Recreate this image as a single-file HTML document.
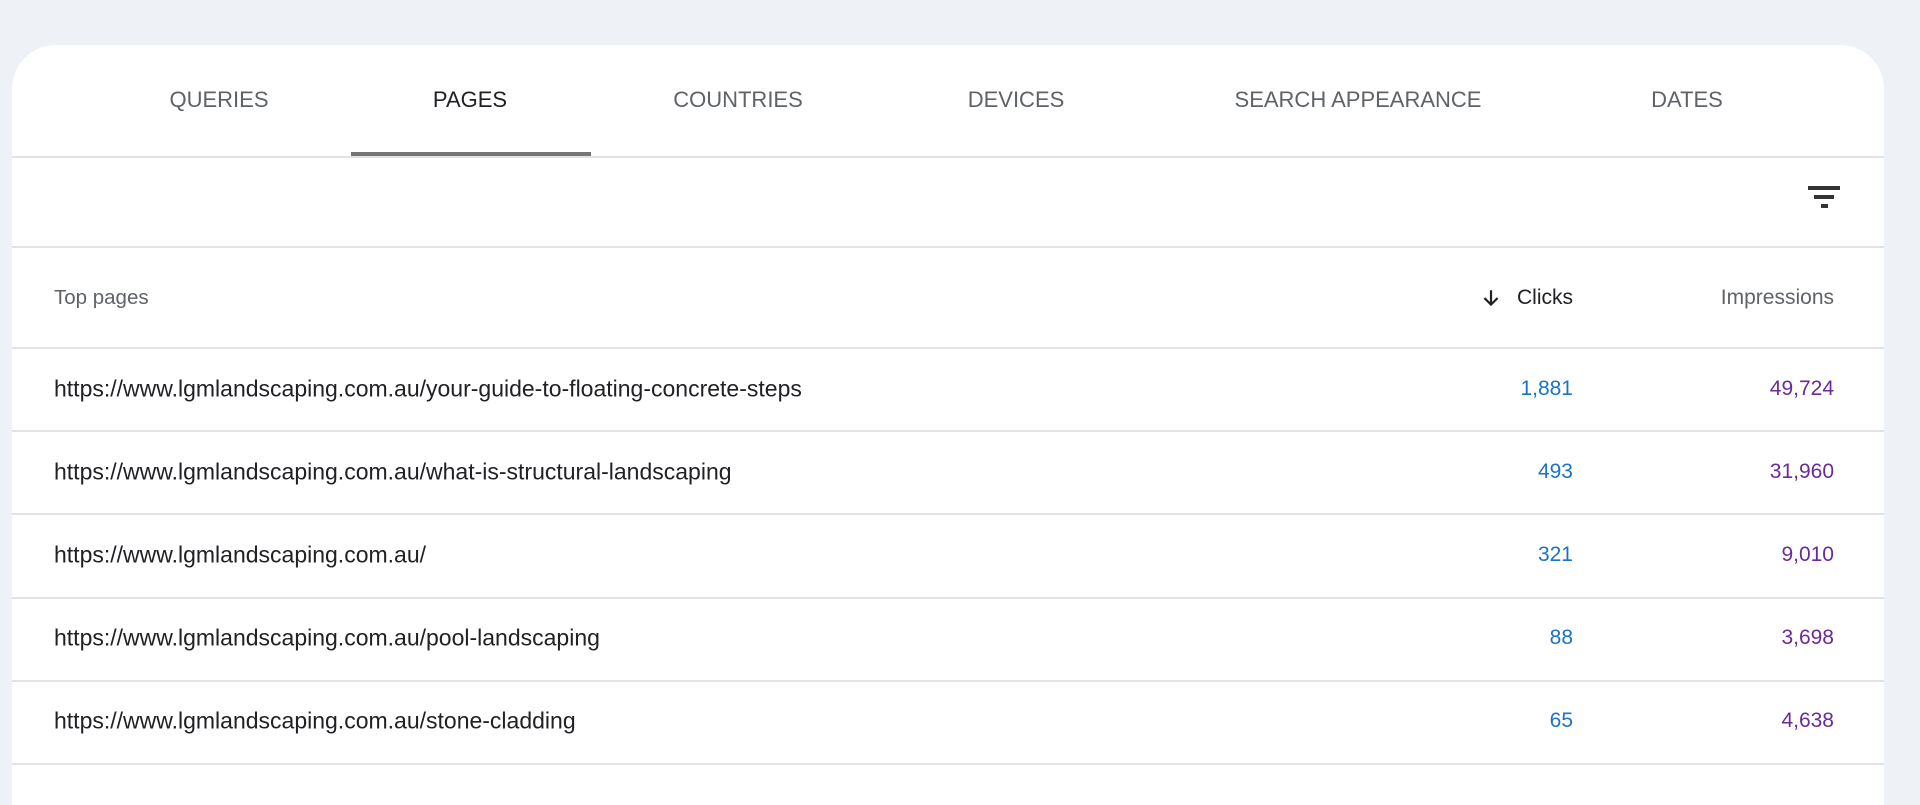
<!DOCTYPE html>
<html><head><meta charset="utf-8"><style>
*{margin:0;padding:0;box-sizing:border-box}
body{width:1920px;height:783px;background:#eef2f7;font-family:"Liberation Sans",Roboto,sans-serif;position:relative;overflow:hidden}
.card{position:absolute;left:12px;top:45px;width:1872px;height:760px;background:#fff;border-radius:44px 44px 0 0}
.tab{position:absolute;top:87px;font-size:22px;color:#5f6368;transform:translateX(-50%);white-space:nowrap}
.tab.act{color:#202124}
.ul{position:absolute;left:351px;top:152px;width:240px;height:4px;background:#757575}
.hl{position:absolute;left:12px;width:1872px;height:2px;background:#e3e3e3}
.t{position:absolute;font-size:23px;color:#202124;white-space:nowrap;transform:translateY(-50%)}
.n{font-size:21px}
.c{color:#1a73c8}.i{color:#6a2a9a}
</style></head><body>
<div class="card"></div>
<div class="tab" style="left:219px">QUERIES</div>
<div class="tab act" style="left:470px">PAGES</div>
<div class="tab" style="left:738px">COUNTRIES</div>
<div class="tab" style="left:1016px">DEVICES</div>
<div class="tab" style="left:1358px">SEARCH APPEARANCE</div>
<div class="tab" style="left:1687px">DATES</div>
<div class="ul"></div>
<div class="hl" style="top:156px"></div>
<div style="position:absolute;left:1808px;top:186px;width:32px;height:4px;background:#333"></div>
<div style="position:absolute;left:1814px;top:195px;width:20px;height:4px;background:#333"></div>
<div style="position:absolute;left:1821px;top:204px;width:7px;height:4px;background:#333"></div>
<div class="hl" style="top:246px"></div>
<div class="t" style="left:54px;top:298px;font-size:20.5px;color:#5f6368">Top pages</div>
<svg style="position:absolute;left:1480px;top:287px" width="22" height="22" viewBox="0 0 20 20"><path d="M10 3v13M4 10l6 6 6-6" stroke="#202124" stroke-width="2" fill="none"/></svg>
<div class="t" style="right:347px;top:298px;font-size:21px;color:#202124">Clicks</div>
<div class="t" style="right:86px;top:298px;font-size:21px;color:#5f6368">Impressions</div>
<div class="hl" style="top:347px"></div>

<div class="t" style="left:54px;top:389px">https://www.lgmlandscaping.com.au/your-guide-to-floating-concrete-steps</div>
<div class="t n c" style="right:347px;top:389px">1,881</div>
<div class="t n i" style="right:86px;top:389px">49,724</div>
<div class="hl" style="top:430px"></div>

<div class="t" style="left:54px;top:472px">https://www.lgmlandscaping.com.au/what-is-structural-landscaping</div>
<div class="t n c" style="right:347px;top:472px">493</div>
<div class="t n i" style="right:86px;top:472px">31,960</div>
<div class="hl" style="top:513px"></div>

<div class="t" style="left:54px;top:555px">https://www.lgmlandscaping.com.au/</div>
<div class="t n c" style="right:347px;top:555px">321</div>
<div class="t n i" style="right:86px;top:555px">9,010</div>
<div class="hl" style="top:597px"></div>

<div class="t" style="left:54px;top:638px">https://www.lgmlandscaping.com.au/pool-landscaping</div>
<div class="t n c" style="right:347px;top:638px">88</div>
<div class="t n i" style="right:86px;top:638px">3,698</div>
<div class="hl" style="top:680px"></div>

<div class="t" style="left:54px;top:721px">https://www.lgmlandscaping.com.au/stone-cladding</div>
<div class="t n c" style="right:347px;top:721px">65</div>
<div class="t n i" style="right:86px;top:721px">4,638</div>
<div class="hl" style="top:763px"></div>
</body></html>
